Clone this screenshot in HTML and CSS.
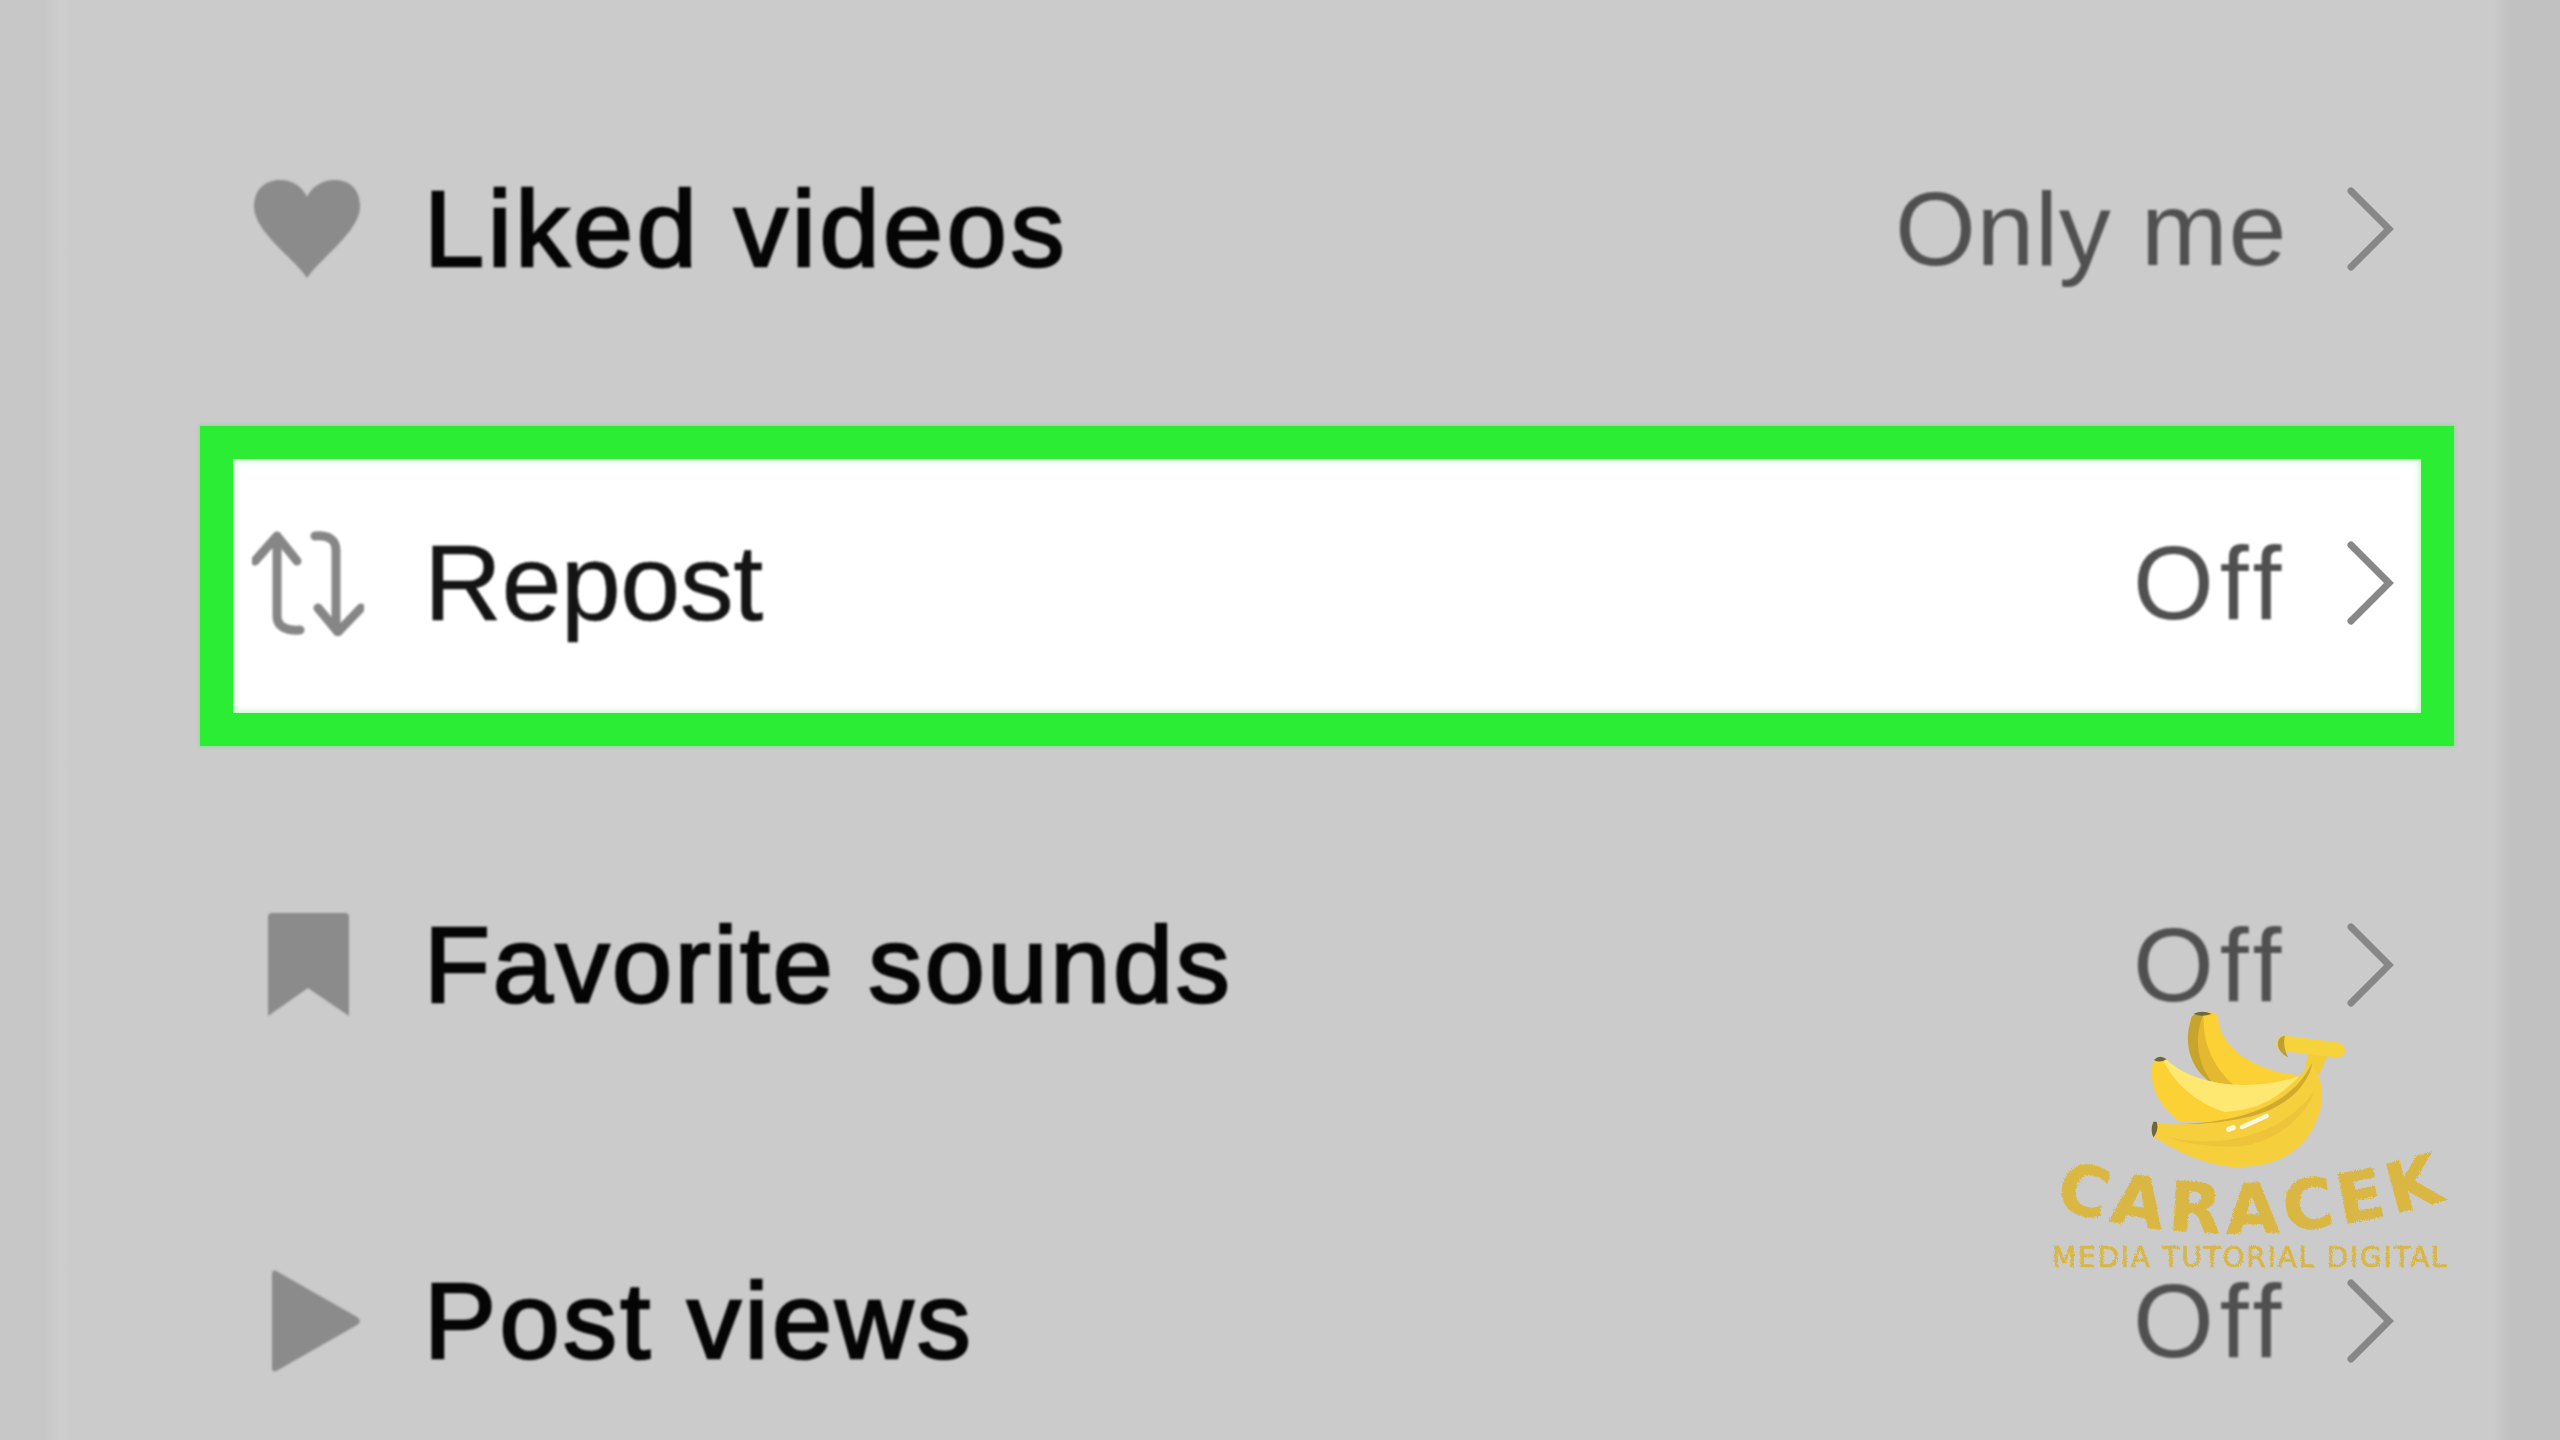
FILE: index.html
```html
<!DOCTYPE html>
<html lang="en">
<head>
<meta charset="utf-8">
<title>Privacy settings</title>
<link rel="stylesheet" href="styles.css">
</head>
<body>
<main class="list">
  <div class="row row-liked">
    <span class="icon"><svg viewBox="0 0 112 98" width="112" height="98"><path class="solid" d="M55 98C42 78 2 52 2 26 2 9 14 0 28 0c12 0 22 6 27 17C60 6 71 0 83 0c14 0 25 9 25 26 0 26-40 52-53 72z"/></svg></span>
    <span class="label strong">Liked videos</span>
    <span class="value value-only">Only me</span>
    <svg class="chev" viewBox="0 0 50 84" width="50" height="84"><path d="M6 4l38 38L6 80"/></svg>
  </div>
  <div class="row row-repost">
    <span class="icon"><svg viewBox="0 0 112 106" width="112" height="106"><path class="line" d="M3 31L25 6l20 25M25 6v80c0 10 8 15 23 14M63 6c14-1 21 4 21 14v80M66 78l20 24 23-24"/></svg></span>
    <span class="label">Repost</span>
    <span class="value value-off">Off</span>
    <svg class="chev" viewBox="0 0 50 84" width="50" height="84"><path d="M6 4l38 38L6 80"/></svg>
  </div>
  <div class="row row-sounds">
    <span class="icon"><svg viewBox="0 0 112 104" width="112" height="104"><path class="solid" d="M16 4q0-4 4-4h73q4 0 4 4v99L56 75 16 103z"/></svg></span>
    <span class="label strong">Favorite sounds</span>
    <span class="value value-off">Off</span>
    <svg class="chev" viewBox="0 0 50 84" width="50" height="84"><path d="M6 4l38 38L6 80"/></svg>
  </div>
  <div class="row row-views">
    <span class="icon"><svg viewBox="0 0 112 104" width="112" height="104"><path class="solid" d="M20 6q0-7 6-3l79 45q6 4 0 8L26 101q-6 4-6-3z"/></svg></span>
    <span class="label strong">Post views</span>
    <span class="value value-off">Off</span>
    <svg class="chev" viewBox="0 0 50 84" width="50" height="84"><path d="M6 4l38 38L6 80"/></svg>
  </div>
</main>

<svg class="logo" viewBox="0 0 1560 1080" width="520" height="360" aria-label="Caracek">
  <defs>
    <filter id="rough" x="-5%" y="-5%" width="110%" height="110%">
      <feTurbulence type="fractalNoise" baseFrequency="0.35" numOctaves="2" seed="4"/>
      <feDisplacementMap in="SourceGraphic" scale="12"/>
    </filter>
    <path id="arc" d="M222 682Q800 850 1422 650"/>
  </defs>
  <path class="b-main" d="M635 110Q660 88 705 100 716 105 715 122C722 190 800 270 965 288 900 330 830 342 780 335 690 320 610 240 630 130z"/>
  <path class="b-mid" d="M672 108C665 180 700 280 790 335 750 330 715 320 690 300 640 240 635 170 672 108z"/>
  <path class="b-dark" d="M635 110Q650 96 672 102C640 170 650 250 700 312 630 270 612 190 630 130z"/>
  <path class="b-stem" d="M985 215l60 5-25 60-50 10z"/>
  <path class="b-main" d="M518 250Q540 225 562 240C620 300 780 350 975 285 950 340 880 385 800 400 760 420 660 430 600 425 540 380 505 320 518 250z"/>
  <path class="b-light" d="M545 232Q555 232 562 240C620 300 780 350 978 283 930 340 830 392 735 396 650 370 580 310 545 232z"/>
  <path class="b-front" d="M515 440Q530 422 545 432C700 440 880 400 990 250 1040 300 1040 390 980 475 920 550 830 565 750 560 650 550 570 500 522 472z"/>
  <path class="b-band" d="M600 432C760 428 905 385 975 285L997 248C985 320 910 390 800 412 730 428 660 434 600 432z"/>
  <path class="b-shade" d="M560 470C700 505 900 480 1005 330 970 430 860 498 760 500 680 500 610 490 560 470z"/>
  <path class="b-tip" d="M522 240Q540 222 560 238 540 250 522 240zM640 102Q665 88 695 102 665 112 640 102zM520 425Q510 450 520 472 538 450 530 425z"/>
  <path class="b-stalk" d="M912 190L1072 210"/>
  <path class="b-cap" d="M915 167C885 170 885 215 925 232 912 210 910 185 915 167z"/>
  <path class="b-shine" d="M786 441L860 408"/>
  <path class="b-shine-sm" d="M746 448L760 443"/>
  <g class="logo-type" filter="url(#rough)">
    <text class="logo-name"><textPath href="#arc" textLength="1190">CARACEK</textPath></text>
    <text class="logo-sub" x="216" y="860" textLength="1184">MEDIA TUTORIAL DIGITAL</text>
  </g>
</svg>
</body>
</html>
```
FILE: styles.css
```css
html, body {
  margin: 0;
  height: 100%;
}

body {
  position: relative;
  height: 1440px;
  overflow: hidden;
  background: linear-gradient(90deg, #c7c7c7 0, #c7c7c7 45px, #cecece 60px, #cbcbcb 72px, #cbcbcb 2494px, #c1c1c1 2512px, #c1c1c1 100%);
  font-family: "Liberation Sans", Arial, sans-serif;
}

.list {
  display: flex;
  flex-direction: column;
  width: 2254px;
  margin-left: 200px;
  padding-top: 69px;
}

.row {
  display: flex;
  align-items: center;
  box-sizing: border-box;
  height: 320px;
  padding: 0 26px 0 19px;
  border: 33px solid transparent;
  flex: none;
}

.row-repost {
  margin-top: 37px;
  padding-bottom: 6px;
  background: #fff;
  background-clip: padding-box;
  border-color: #2bed33;
  box-shadow: 0 0 3px 1px rgba(80, 235, 90, .45), inset 0 0 5px 2px rgba(80, 235, 90, .35);
}

.row-sounds {
  margin-top: 59px;
}

.row-views {
  margin-top: 36px;
}

.icon {
  display: flex;
  width: 112px;
  justify-content: center;
  flex: none;
  filter: blur(.8px);
}

.solid {
  fill: #8b8b8b;
}

.line {
  fill: none;
  stroke: #868686;
  stroke-width: 9;
  stroke-linecap: round;
  stroke-linejoin: round;
}

.label {
  margin-left: 60px;
  font-size: 108px;
  line-height: 1.2;
  letter-spacing: -.6px;
  color: #141414;
  filter: blur(.9px);
  -webkit-text-stroke: .5px #141414;
}

.strong {
  color: #050505;
  -webkit-text-stroke: 2.6px #050505;
}

.row-liked .label { letter-spacing: 3.65px; }
.row-sounds .label { letter-spacing: 2.67px; }
.row-views .label { letter-spacing: 3.4px; }

.value {
  margin-left: auto;
  font-size: 104px;
  line-height: 1.2;
  color: #505050;
  filter: blur(.9px);
}

.value-only {
  letter-spacing: .7px;
}

.value-off {
  letter-spacing: 5.7px;
}

.chev {
  margin-left: 58px;
  flex: none;
  filter: blur(.7px);
}

.chev path {
  fill: none;
  stroke: #878787;
  stroke-width: 7;
  stroke-linecap: round;
  stroke-linejoin: miter;
}

.logo {
  position: absolute;
  left: 1980px;
  top: 980px;
}

.b-main { fill: #fbd136; }
.b-mid { fill: #e5b92f; }
.b-dark { fill: #c7a52d; }
.b-light { fill: #ffe872; }
.b-front { fill: #f6d03c; }
.b-stem { fill: #f3cd38; }
.b-tip { fill: #6f6738; }
.b-cap { fill: #bf9f2d; }
.b-band { fill: #d2ab2e; }
.b-shade { fill: #eec53a; }

.b-stalk {
  fill: none;
  stroke: #f7d33b;
  stroke-width: 46;
  stroke-linecap: round;
}

.b-shine,
.b-shine-sm {
  fill: none;
  stroke: #fff8e0;
  stroke-linecap: round;
}

.b-shine { stroke-width: 13; }
.b-shine-sm { stroke-width: 15; }

.logo-name {
  font-family: "DejaVu Sans", sans-serif;
  font-weight: 700;
  font-size: 205px;
  fill: #dab742;
  stroke: #dab742;
  stroke-width: 3;
}

.logo-sub {
  font-family: "DejaVu Sans", sans-serif;
  font-size: 84px;
  fill: #d8b646;
  stroke: #d8b646;
  stroke-width: 2;
}
```
